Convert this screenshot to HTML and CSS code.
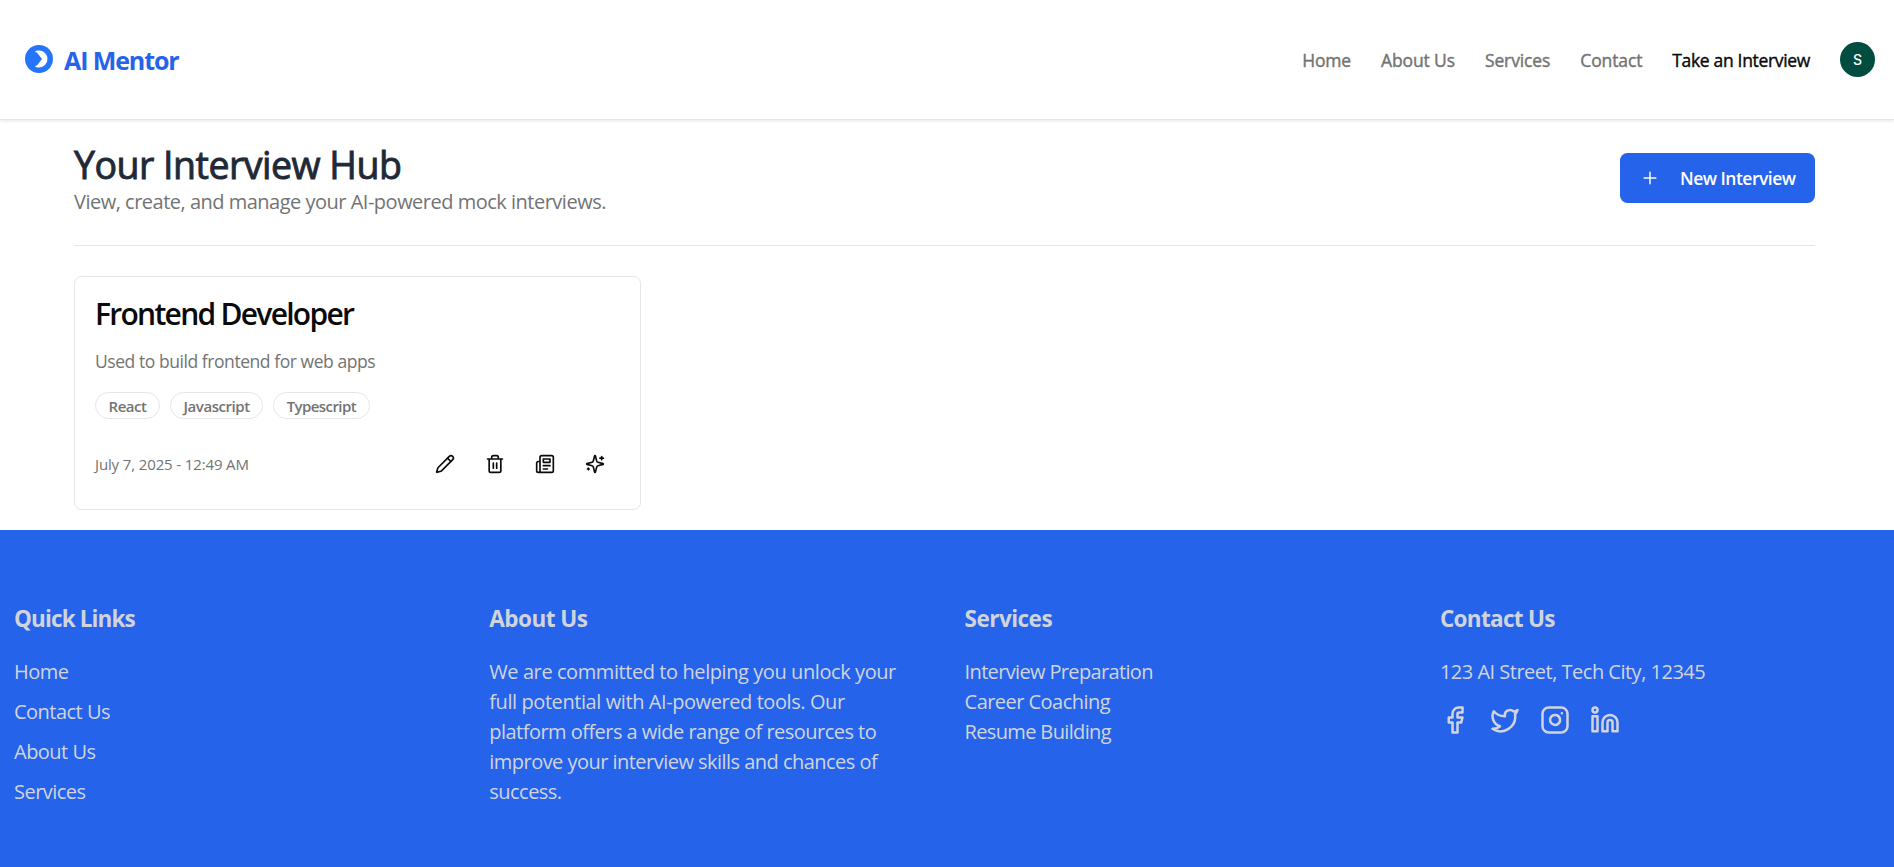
FILE: index.html
```
<!DOCTYPE html>
<html lang="en">
<head>
<meta charset="utf-8">
<title>AI Mentor</title>
<link rel="stylesheet" href="styles.css">
</head>
<body>
<header class="site-header">
  <a class="brand">
    <svg class="brand-mark" viewBox="0 0 28 28"><circle cx="14" cy="14" r="14" fill="#2575fc"/><path d="M9.900 7C10.600 5.800 12 5.500 14 5.500a8.500 8.500 0 0 1 0 17c-2 0-3.400-.3-4.100-1.500 1.700-.3 2.700-1 3.600-2.500L17 14l-3.500-4.500C12.600 8 11.600 7.300 9.900 7z" fill="#fff"/></svg>
    <span class="brand-name">AI Mentor</span>
  </a>
  <nav class="main-nav">
    <a class="nav-link nav-home">Home</a>
    <a class="nav-link">About Us</a>
    <a class="nav-link">Services</a>
    <a class="nav-link">Contact</a>
    <a class="nav-link active">Take an Interview</a>
    <span class="avatar">S</span>
  </nav>
</header>
<main class="hub">
  <div class="hub-head">
    <div>
      <h1>Your Interview Hub</h1>
      <p class="subtitle">View, create, and manage your AI-powered mock interviews.</p>
    </div>
    <button class="new-btn"><svg class="icon" viewBox="0 0 24 24"><path d="M5 12h14M12 5v14"/></svg><span>New Interview</span></button>
  </div>
  <div class="cards">
    <article class="card">
      <h2>Frontend Developer</h2>
      <p class="desc">Used to build frontend for web apps</p>
      <div class="tags"><span class="tag">React</span><span class="tag">Javascript</span><span class="tag tag-type">Typescript</span></div>
      <div class="card-foot">
        <time>July 7, 2025 - 12:49 AM</time>
        <div class="actions">
          <span class="action"><svg class="icon" viewBox="0 0 24 24"><path d="M21.174 6.812a1 1 0 0 0-3.986-3.987L3.842 16.174a2 2 0 0 0-.5.83l-1.321 4.352a.5.5 0 0 0 .623.622l4.353-1.320a2 2 0 0 0 .83-.497z"/><path d="m15 5 4 4"/></svg></span>
          <span class="action"><svg class="icon" viewBox="0 0 24 24"><path d="M3 6h18M19 6v14c0 1-1 2-2 2H7c-1 0-2-1-2-2V6M8 6V4c0-1 1-2 2-2h4c1 0 2 1 2 2v2M10 11v6M14 11v6"/></svg></span>
          <span class="action"><svg class="icon" viewBox="0 0 24 24"><path d="M4 22h16a2 2 0 0 0 2-2V4a2 2 0 0 0-2-2H8a2 2 0 0 0-2 2v16a2 2 0 0 1-2 2Zm0 0a2 2 0 0 1-2-2v-9c0-1.100.9-2 2-2h2M18 14h-8M15 18h-5M10 6h8v4h-8V6Z"/></svg></span>
          <span class="action"><svg class="icon" viewBox="0 0 24 24"><path d="M9.937 15.500A2 2 0 0 0 8.500 14.063l-6.135-1.582a.5.5 0 0 1 0-.962L8.500 9.936A2 2 0 0 0 9.937 8.500l1.582-6.135a.5.5 0 0 1 .963 0L14.063 8.500A2 2 0 0 0 15.500 9.937l6.135 1.581a.5.5 0 0 1 0 .964L15.500 14.063a2 2 0 0 0-1.437 1.437l-1.582 6.135a.5.5 0 0 1-.963 0zM20 3v4M22 5h-4M4 17v2M5 18H3"/></svg></span>
        </div>
      </div>
    </article>
  </div>
</main>
<footer class="site-footer">
  <section>
    <h3 class="quick">Quick Links</h3>
    <ul class="links"><li>Home</li><li>Contact Us</li><li>About Us</li><li>Services</li></ul>
  </section>
  <section>
    <h3>About Us</h3>
    <p class="about">We are committed to helping you unlock your<br>full potential with AI-powered tools. Our<br><span class="snug">platform offers a wide range of resources to<br>improve your interview skills and chances of<br>success.</span></p>
  </section>
  <section>
    <h3>Services</h3>
    <ul class="services"><li class="prep">Interview Preparation</li><li>Career Coaching</li><li class="prep">Resume Building</li></ul>
  </section>
  <section>
    <h3 class="contact">Contact Us</h3>
    <p class="address">123 AI Street, Tech City, 12345</p>
    <div class="social">
      <svg class="icon" viewBox="0 0 24 24"><path d="M18 2h-3a5 5 0 0 0-5 5v3H7v4h3v8h4v-8h3l1-4h-4V7a1 1 0 0 1 1-1h3z"/></svg>
      <svg class="icon" viewBox="0 0 24 24"><path d="M22 4s-.7 2.100-2 3.400c1.600 10-9.400 17.300-18 11.600 2.200.1 4.400-.6 6-2C3 15.500.5 9.600 3 5c2.200 2.600 5.600 4.100 9 4-.9-4.200 4-6.600 7-3.800 1.100 0 3-1.200 3-1.200z"/></svg>
      <svg class="icon" viewBox="0 0 24 24"><rect x="2" y="2" width="20" height="20" rx="5"/><path d="M16 11.370A4 4 0 1 1 12.630 8 4 4 0 0 1 16 11.370zM17.500 6.500h.01"/></svg>
      <svg class="icon" viewBox="0 0 24 24"><path d="M16 8a6 6 0 0 1 6 6v7h-4v-7a2 2 0 0 0-4 0v7h-4v-7a6 6 0 0 1 6-6z"/><rect x="2" y="9" width="4" height="12"/><circle cx="4" cy="4" r="2"/></svg>
    </div>
  </section>
</footer>
</body>
</html>
```
FILE: styles.css
```
* { box-sizing: border-box; margin: 0; padding: 0; }
body {
  height: 867px;
  overflow: hidden;
  display: flex;
  flex-direction: column;
  font-family: "Open Sans", "Noto Sans", sans-serif;
  color: #0a0a0a;
  background: #fff;
  white-space: nowrap;
}
ul { list-style: none; }
.icon {
  width: 20px;
  height: 20px;
  flex: none;
  fill: none;
  stroke: currentColor;
  stroke-width: 2;
  stroke-linecap: round;
  stroke-linejoin: round;
}

/* Header */
.site-header {
  display: flex;
  justify-content: space-between;
  align-items: center;
  height: 120px;
  flex: none;
  padding: 0 19px 0 25px;
  border-bottom: 1px solid #e5e5e5;
  box-shadow: 0 1px 3px rgba(0, 0, 0, .1);
}
.brand { display: flex; align-items: center; gap: 11px; }
.brand-mark { width: 28px; height: 28px; margin-bottom: 1px; }
.brand-name {
  padding-top: 2px;
  font-size: 25px;
  font-weight: 700;
  line-height: 35px;
  letter-spacing: -1.1px;
  color: #2563eb;
}
.main-nav { display: flex; align-items: center; gap: 30px; }
.nav-link {
  padding-top: 2px;
  font-size: 17.5px;
  font-weight: 400;
  line-height: 25px;
  letter-spacing: -.12px;
  color: #737373;
  -webkit-text-stroke: .4px currentColor;
}
.nav-home { letter-spacing: -.2px; }
.nav-link.active { color: #0a0a0a; letter-spacing: -.33px; }
.avatar {
  width: 35px;
  height: 35px;
  border-radius: 50%;
  background: #024d40;
  color: #fff;
  font: 500 14px/35px Inter, sans-serif;
  text-align: center;
}

/* Interview hub */
.hub { height: 410px; flex: none; padding: 21px 79px 20px 74px; }
.hub-head {
  display: flex;
  justify-content: space-between;
  align-items: center;
  height: 105px;
  padding-bottom: 30px;
  border-bottom: 1px solid #e5e5e5;
}
h1 {
  height: 45px;
  padding-top: 1px;
  font-size: 37.5px;
  font-weight: 400;
  line-height: 45px;
  letter-spacing: -.5px;
  color: #1f2937;
  -webkit-text-stroke: .9px currentColor;
}
.subtitle { height: 30px; padding-top: 1px; font-size: 20px; line-height: 30px; letter-spacing: -.5px; color: #737373; }
.new-btn {
  display: flex;
  align-items: center;
  gap: 20px;
  width: 195px;
  height: 50px;
  padding-left: 20px;
  border: 0;
  border-radius: 7.5px;
  background: #2563eb;
  color: #fff;
  font: 600 17.5px/25px "Open Sans", sans-serif;
  letter-spacing: -.52px;
}
.new-btn span { padding-top: 1px; }
.new-btn .icon { stroke-width: 1.75; }
.cards { display: flex; padding-top: 30px; }
.card {
  display: flex;
  flex-direction: column;
  gap: 20px;
  width: 567px;
  height: 234px;
  padding: 20px;
  border: 1px solid #e5e5e5;
  border-radius: 7.5px;
}
h2 { height: 30px; padding-top: 1px; font-size: 30px; font-weight: 600; line-height: 31px; letter-spacing: -1.72px; }
.desc { height: 25px; padding-top: 1px; font-size: 17.5px; line-height: 26px; letter-spacing: -.44px; color: #737373; }
.tags { display: flex; gap: 10px; }
.tag {
  height: 27px;
  padding: 1px 12.5px 0;
  border: 1px solid #e5e5e5;
  border-radius: 14px;
  font-size: 15px;
  font-weight: 600;
  line-height: 25px;
  letter-spacing: -.45px;
  color: #737373;
}
.tag-type { letter-spacing: -.57px; }
.card-foot { display: flex; justify-content: space-between; align-items: center; height: 50px; }
time { font-size: 15px; line-height: 20px; letter-spacing: -.13px; color: #737373; }
.actions { display: flex; }
.action { display: flex; width: 50px; height: 50px; align-items: center; justify-content: center; }

/* Footer */
.site-footer {
  flex: 1;
  display: grid;
  grid-template-columns: repeat(4, 435.3px);
  column-gap: 40px;
  padding: 71px 14px 0;
  background: #2563eb;
  color: #d1d5db;
  font-size: 20px;
  line-height: 30px;
  letter-spacing: -.42px;
}
h3 { margin-bottom: 20px; font-size: 22.5px; font-weight: 700; line-height: 35px; letter-spacing: -.52px; }
.quick { letter-spacing: -.87px; }
.contact { letter-spacing: -.68px; }
.links { display: grid; row-gap: 10px; letter-spacing: -.52px; }
.links, .about, .services, .address { padding-top: 1px; }
.services { letter-spacing: -.54px; }
.snug { letter-spacing: -.53px; }
.prep { letter-spacing: -.65px; }
.address { letter-spacing: -.5px; }
.social { display: flex; gap: 20px; padding-top: 18px; }
.social .icon { width: 30px; height: 30px; }
```
